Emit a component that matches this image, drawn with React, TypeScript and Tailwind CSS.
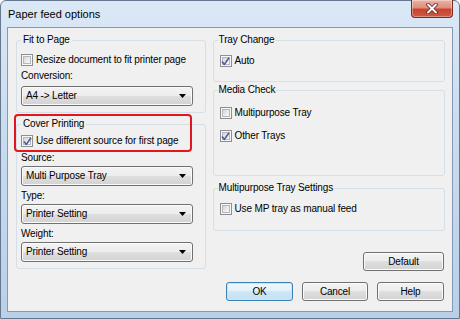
import React from "react";

function Checkbox({ checked }: { checked?: boolean }) {
  return (
    <span className="flex h-[12px] w-[12px] shrink-0 items-center justify-center border border-[#8e8f8f] bg-[#f7f7f7] p-[1px]">
      <span className="flex h-full w-full items-center justify-center border border-[#b5b9bf] bg-gradient-to-br from-[#d3d6da] to-[#fbfbfb]">
        {checked && (
          <svg width="9" height="9" viewBox="0 0 9 9" className="overflow-visible">
            <path d="M1 4.6 L3.4 7.4 L8 0.8" fill="none" stroke="#4b5e95" strokeWidth="1.6" strokeLinejoin="round" />
          </svg>
        )}
      </span>
    </span>
  );
}

function CheckRow({ checked, label, className = "" }: { checked?: boolean; label: string; className?: string }) {
  return (
    <div className={`flex h-[14px] items-center gap-[3px] ${className}`}>
      <Checkbox checked={checked} />
      <span className="leading-[14px]">{label}</span>
    </div>
  );
}

function Dropdown({ value, className = "" }: { value: string; className?: string }) {
  return (
    <div
      className={`flex h-[20px] w-[172px] items-center justify-between rounded-[3px] border border-[#707070] bg-[linear-gradient(#f3f3f3_0%,#ececec_50%,#dfdfdf_50%,#d2d2d2_100%)] pl-[4px] pr-[6px] shadow-[inset_0_0_0_1px_#fbfbfb] ${className}`}
    >
      <span className="leading-[14px]">{value}</span>
      <svg width="7" height="4" viewBox="0 0 7 4">
        <path d="M0 0H7L3.5 4Z" fill="#000" />
      </svg>
    </div>
  );
}

function Button({ label, primary, className = "" }: { label: string; primary?: boolean; className?: string }) {
  return (
    <div
      className={`flex h-[19px] items-center justify-center rounded-[3px] border ${
        primary
          ? "border-[#3c7fb1] bg-[linear-gradient(#eef7fd_0%,#e2f1fb_50%,#cfe7f7_50%,#c2e0f5_100%)] shadow-[inset_0_0_0_1px_#c5e6fb]"
          : "border-[#707070] bg-[linear-gradient(#f3f3f3_0%,#ececec_50%,#dfdfdf_50%,#d2d2d2_100%)] shadow-[inset_0_0_0_1px_#fbfbfb]"
      } ${className}`}
    >
      <span className="leading-[14px]">{label}</span>
    </div>
  );
}

function Label({ text, className = "" }: { text: string; className?: string }) {
  return <div className={`h-[16px] leading-[16px] ${className}`}>{text}</div>;
}

function Group({
  title,
  className = "",
  pad = "px-[4px]",
  legendCls = "px-[2px]",
  children,
}: {
  title: string;
  className?: string;
  pad?: string;
  legendCls?: string;
  children: React.ReactNode;
}) {
  return (
    <fieldset className={`flex flex-col rounded-[3px] border border-[#d5dfe5] ${pad} ${className}`}>
      <legend className={`leading-[12px] ${legendCls}`}>{title}</legend>
      {children}
    </fieldset>
  );
}

export default function App() {
  return (
    <div className="h-[319px] w-[460px] overflow-hidden bg-white font-['Liberation_Sans',Arial,sans-serif] text-[10px] tracking-[-0.15px] text-black">
      <div className="flex h-full w-full flex-col rounded-t-[6px] border border-[#66778e] bg-[linear-gradient(#dbe8f6_0%,#c9dcf0_40%,#b9d0e9_100%)] px-[6px] pb-[6px]">
        {/* title bar */}
        <div className="flex h-[26px] shrink-0 items-start justify-between">
          <span className="ml-[1px] mt-[6px] text-[11px] leading-[14px] tracking-normal text-black">Paper feed options</span>
          <div className="-mt-[1px] flex h-[18px] w-[42px] items-center justify-center rounded-b-[4px] border border-t-0 border-[#7a2c22] bg-[linear-gradient(#eab2a6_0%,#e08d7c_45%,#c8442e_55%,#cf5a43_100%)] shadow-[inset_0_0_0_1px_rgba(255,255,255,0.35)]">
            <svg width="12" height="11" viewBox="0 0 12 11">
              <path d="M2 1.5 L10 9.5 M10 1.5 L2 9.5" stroke="#5a2a25" strokeWidth="3.6" strokeLinecap="round" />
              <path d="M2 1.5 L10 9.5 M10 1.5 L2 9.5" stroke="#ffffff" strokeWidth="1.9" strokeLinecap="round" />
            </svg>
          </div>
        </div>

        {/* client area */}
        <div className="flex flex-1 border border-[#8599b2] bg-[#f0f0f0] pl-[8px] pr-[7px]">
          {/* left column */}
          <div className="relative flex w-[190px] flex-col pt-[6px]">
            <Group title="Fit to Page" className="h-[79px]">
              <CheckRow label="Resize document to fit printer page" className="mt-[7px]" />
              <Label text="Conversion:" className="mt-[1px]" />
              <Dropdown value="A4 -> Letter" className="mt-[2px]" />
            </Group>

            <Group title="Cover Printing" className="mt-[5px] h-[151px]">
              <CheckRow checked label="Use different source for first page" className="mt-[4px]" />
              <Label text="Source:" className="mt-[2px]" />
              <Dropdown value="Multi Purpose Tray" />
              <Label text="Type:" className="mt-[2px]" />
              <Dropdown value="Printer Setting" />
              <Label text="Weight:" className="mt-[2px]" />
              <Dropdown value="Printer Setting" />
            </Group>

            {/* red annotation */}
            <div className="pointer-events-none absolute left-[-2px] top-[86px] h-[38px] w-[178px] rounded-[4px] border-2 border-[#e3161e]" />
          </div>

          {/* right column */}
          <div className="ml-[7px] flex w-[233px] flex-col pt-[6px]">
            <Group title="Tray Change" className="h-[48px]" pad="px-[6px]" legendCls="-ml-[2px] px-[1px]">
              <CheckRow checked label="Auto" className="mt-[8px]" />
            </Group>

            <Group title="Media Check" className="mt-[2px] h-[92px]" pad="px-[6px]" legendCls="-ml-[2px] px-[1px]">
              <CheckRow label="Multipurpose Tray" className="mt-[10px]" />
              <CheckRow checked label="Other Trays" className="mt-[9px]" />
            </Group>

            <Group title="Multipurpose Tray Settings" className="mt-[6px] h-[49px]" pad="px-[6px]" legendCls="-ml-[2px] px-[1px]">
              <CheckRow label="Use MP tray as manual feed" className="mt-[8px]" />
            </Group>

            <Button label="Default" className="mr-[1px] mt-[21px] w-[81px] self-end" />

            <div className="mr-[1px] mt-[11px] flex justify-end gap-[9px]">
              <Button label="OK" primary className="w-[67px]" />
              <Button label="Cancel" className="w-[66px]" />
              <Button label="Help" className="w-[67px]" />
            </div>
          </div>
        </div>
      </div>
    </div>
  );
}
